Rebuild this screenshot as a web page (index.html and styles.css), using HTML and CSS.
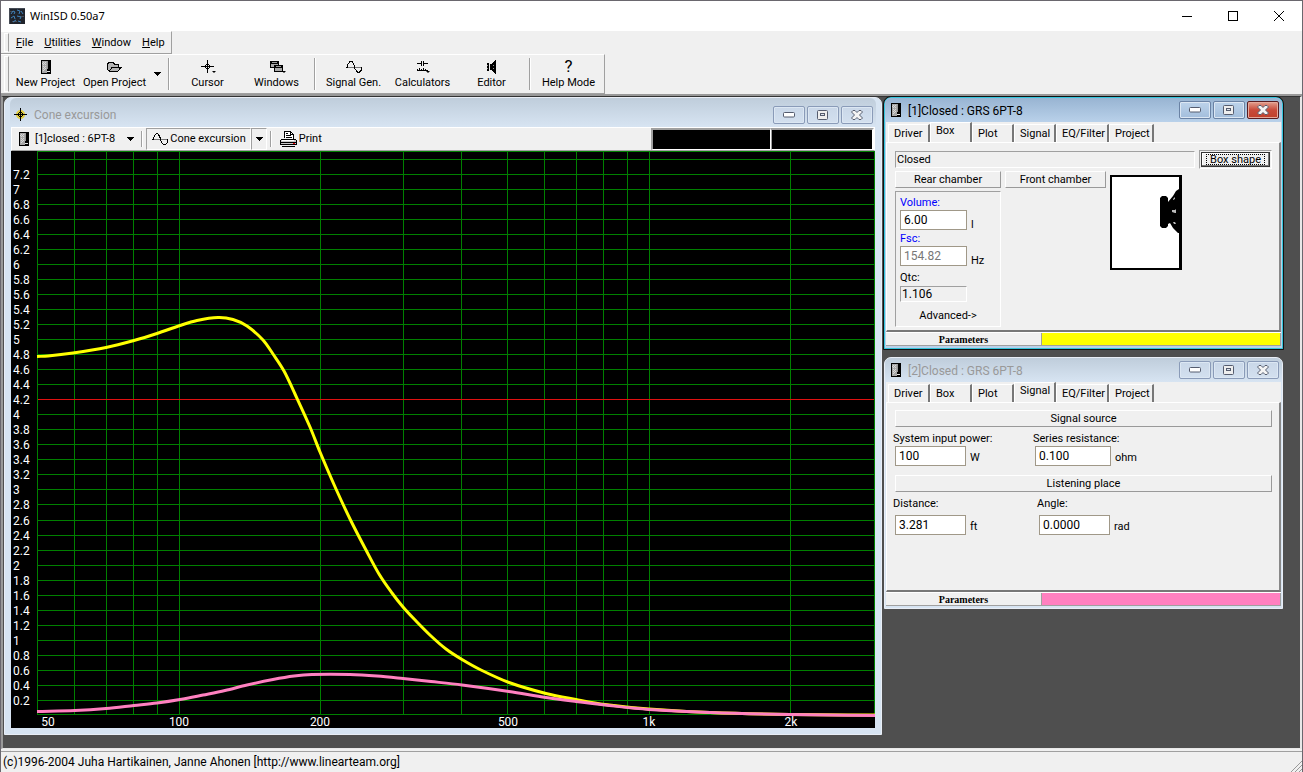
FILE: index.html
```html
<!DOCTYPE html>
<html lang="en">
<head>
<meta charset="utf-8">
<title>WinISD 0.50a7</title>
<link rel="stylesheet" href="styles.css">
</head>
<body>
<svg class="sprites" aria-hidden="true">
  <defs>
    <symbol id="i-box" viewBox="0 0 10 14">
      <path fill="#000" d="M0 0h10v14H0z"/>
      <path fill="#a8a8a8" d="M1 1h5v12H1z"/>
      <path fill="#d8d8d8" d="M2 2h1v1H2zM4 2h1v1H4zM1 3h1v1H1zM3 3h1v1H3zM2 4h1v1H2zM4 4h1v1H4zM2 6h1v1H2zM4 6h1v1H4zM3 7h1v1H3zM2 8h1v1H2zM4 8h1v1H4zM3 9h1v1H3zM2 10h1v1H2z"/>
      <path fill="#e8e8e8" d="M6 11h3v1H6z"/><path fill="#999" d="M6 1h1v8H6z"/>
    </symbol>
    <symbol id="i-folder" viewBox="0 0 15 11">
      <path fill="#b4b4b4" stroke="#000" d="M1.500 9.500l-1-2v-5l2-2h3l2 2h3l1 1v2h3l-4 4.500z"/>
      <path fill="none" stroke="#000" d="M2.500 9.500l3-4h6"/>
    </symbol>
    <symbol id="i-down" viewBox="0 0 8 4"><path d="M0 0h8L4 4z"/></symbol>
    <symbol id="i-target" viewBox="0 0 13 13">
      <path fill="none" stroke="#000" d="M6.500 0v13M0 6.500h13M5 4.500h3M5 8.500h3M4.500 5v3M8.500 5v3"/>
    </symbol>
    <symbol id="i-windows" viewBox="0 0 14 12">
      <path fill="#a8a8a8" stroke="#000" d="M.5.5h8v6h-8z"/><path d="M0 0h9v3H0z"/>
      <path fill="#a8a8a8" stroke="#000" d="M4.500 4.500h8v6h-8z"/><path d="M4 4h9v3H4z"/>
      <path fill="#999" d="M2 1h5v1H2zM6 5h5v1H6z"/>
    </symbol>
    <symbol id="i-wave" viewBox="0 0 16 12">
      <path stroke="#777" d="M0 6.500h16"/>
      <path fill="none" stroke="#000" d="M0 6.500h1.500v-2l2-3 1-1h1l1 1 2 4v2l2 3 1 1h2l2-2v-3.500"/>
    </symbol>
    <symbol id="i-coil" viewBox="0 0 11 11">
      <path fill="none" stroke="#000" d="M0 2.500h4M7 2.500h4M4.500 0v5M6.500 0v5"/>
      <path fill="none" stroke="#000" d="M.5 8v2M2.500 7v2M4.500 8v2M6.500 7v2M8.500 8v2M0 9.500h11"/>
    </symbol>
    <symbol id="i-speaker" viewBox="0 0 9 14">
      <path d="M0 3h2v8H0zM3 4h2l3-4h1v14H8l-3-4H3z"/><path fill="#999" d="M0 5h1v1H0zM0 8h1v1H0zM6 5h1v1H6zM6 8h1v1H6z"/>
    </symbol>
    <symbol id="i-print" viewBox="0 0 17 16">
      <path fill="#fff" stroke="#000" d="M4.500 7V.5h6l3 3V8"/>
      <path fill="none" stroke="#000" d="M10.500.5v3h3M6 2.500h2M6 4.500h5M6 6.500h6"/>
      <path fill="#c8c8c8" stroke="#000" d="M1.500 8.500h14l1 1v4h-16v-4z"/>
      <path stroke="#000" d="M0 11.500h17M2 15.500h13"/><path stroke="#fff" d="M2 9.500h12"/>
      <path fill="#e00" d="M13 12h2v1h-2z"/>
    </symbol>
    <symbol id="i-min" viewBox="0 0 12 6"><rect x=".5" y=".5" width="11" height="4.500" rx="1" fill="#fff" stroke="#555c6e"/></symbol>
    <symbol id="i-restore" viewBox="0 0 12 10"><rect x=".5" y=".5" width="10" height="9" rx="1" fill="#eee" stroke="#555c6e"/><rect x="3.500" y="3.500" width="4" height="2" fill="#dfe5ee" stroke="#555c6e"/></symbol>
    <symbol id="i-close" viewBox="0 0 12 10"><path fill="#f4f4f4" stroke="#555c6e" d="M.5 2L2 .5h2L6 2.500 8 .5h2L11.500 2 8.500 5l3 3L10 9.500H8L6 7.500 4 9.500H2L.5 8l3-3z"/></symbol>
  </defs>
</svg>
<div class="app">
  <header class="titlebar">
    <svg class="app-icon" viewBox="0 0 16 16"><path fill="#20242c" d="M0 0h16v16H0z"/><path fill="none" stroke="#454b55" d="M0 .5h16M.5 0v16M3 13h5M11 8h4M1 3h3"/><path class="smooth" fill="none" stroke="#3e83bd" d="M2 6l2-3 2 1-1 2M8 2l3 1-1 3M2 10l3-2 1 3M8 8l4 1-1 2M4 14l3-2M9 13l3 1M12 3l2 3"/></svg>
    <h1 class="app-title">WinISD 0.50a7</h1>
    <button class="sysbtn" aria-label="Minimize"><svg viewBox="0 0 10 10"><path d="M0 5.500h10"/></svg></button>
    <button class="sysbtn" aria-label="Maximize"><svg viewBox="0 0 10 10"><path d="M.5.5h9v9h-9z"/></svg></button>
    <button class="sysbtn" aria-label="Close"><svg class="smooth" viewBox="0 0 10 10"><path d="M0 0l10 10M10 0L0 10"/></svg></button>
  </header>
  <div class="bands">
    <nav class="band menu">
      <button><u>F</u>ile</button><button><u>U</u>tilities</button><button><u>W</u>indow</button><button><u>H</u>elp</button>
    </nav>
    <div class="band tools">
      <button class="tool"><svg class="ic-box"><use href="#i-box"/></svg>New Project</button>
      <button class="tool"><svg class="ic-folder"><use href="#i-folder"/></svg>Open Project</button>
      <button class="drop" aria-label="Recent projects"><svg class="ic-down"><use href="#i-down"/></svg></button>
      <span class="sep"></span>
      <button class="tool"><span class="has-menu"><svg class="ic-target"><use href="#i-target"/></svg></span>Cursor</button>
      <button class="tool"><span class="has-menu"><svg class="ic-windows"><use href="#i-windows"/></svg></span>Windows</button>
      <span class="sep"></span>
      <button class="tool"><svg class="ic-wave"><use href="#i-wave"/></svg>Signal Gen.</button>
      <button class="tool"><span class="has-menu"><svg class="ic-coil"><use href="#i-coil"/></svg></span>Calculators</button>
      <button class="tool"><svg class="ic-speaker"><use href="#i-speaker"/></svg>Editor</button>
      <span class="sep"></span>
      <button class="tool"><span class="query">?</span>Help Mode</button>
    </div>
  </div>

  <main class="desktop">
    <section class="win chart-win">
      <header class="win-head">
        <svg class="ic-target gold"><use href="#i-target"/></svg>
        <h2>Cone excursion</h2>
        <button class="wbtn" aria-label="Minimize"><svg class="ic-min"><use href="#i-min"/></svg></button>
        <button class="wbtn" aria-label="Restore"><svg class="ic-x"><use href="#i-restore"/></svg></button>
        <button class="wbtn" aria-label="Close"><svg class="ic-x"><use href="#i-close"/></svg></button>
      </header>
      <div class="chart-tools">
        <button class="ct project"><svg class="ic-box"><use href="#i-box"/></svg><span>[1]closed : 6PT-8</span><svg class="ic-down"><use href="#i-down"/></svg></button>
        <span class="sep"></span>
        <button class="ct pressed"><svg class="ic-wave"><use href="#i-wave"/></svg>Cone excursion</button>
        <button class="ct pressed narrow" aria-label="Choose graph"><svg class="ic-down"><use href="#i-down"/></svg></button>
        <span class="sep"></span>
        <button class="ct print"><svg class="ic-print"><use href="#i-print"/></svg>Print</button>
        <output class="readout wide" aria-label="Frequency"></output>
        <output class="readout" aria-label="Value"></output>
      </div>
      <svg class="chart" id="chart" viewBox="11 151 864 577" role="img" aria-label="Cone excursion against frequency"></svg>
    </section>

    <div class="stack">
      <section class="win active">
        <header class="win-head">
          <svg class="ic-box"><use href="#i-box"/></svg>
          <h2>[1]Closed : GRS 6PT-8</h2>
          <button class="wbtn" aria-label="Minimize"><svg class="ic-min"><use href="#i-min"/></svg></button>
          <button class="wbtn" aria-label="Restore"><svg class="ic-x"><use href="#i-restore"/></svg></button>
          <button class="wbtn red" aria-label="Close"><svg class="ic-x"><use href="#i-close"/></svg></button>
        </header>
        <div class="tabs" role="tablist">
          <button role="tab">Driver</button><button role="tab" aria-selected="true">Box</button><button role="tab">Plot</button><button role="tab">Signal</button><button role="tab" class="long">EQ/Filter</button><button role="tab" class="mid">Project</button>
        </div>
        <div class="page box-page">
          <div class="shape-row">
            <output class="sunken grow">Closed</output>
            <span class="well"><button class="shape"><span>Box shape</span></button></span>
          </div>
          <div class="chambers">
            <div class="rear">
              <button class="raised">Rear chamber</button>
              <div class="group">
                <label class="link" for="vol">Volume:</label>
                <div class="row"><input id="vol" value="6.00"><span>l</span></div>
                <label class="link" for="fsc">Fsc:</label>
                <div class="row"><input id="fsc" class="dim" value="154.82" readonly><span>Hz</span></div>
                <label class="qtc" for="qtc">Qtc:</label>
                <output id="qtc" class="sunken">1.106</output>
                <button class="adv">Advanced-&gt;</button>
              </div>
            </div>
            <button class="raised front">Front chamber</button>
            <svg class="cabinet" viewBox="0 0 72 96"><path fill="#000" d="M0 1h72v95H0z"/><path fill="#fff" d="M2 3h67v91H2z"/><path fill="#000" d="M50 24l2-2h4l2 2v4l5-6 3-5 3-2h2v44h-3l-5-5-3-5-2 1v2l-2 2h-4l-2-2z"/><path fill="#bbb" d="M63 25l2-2v2l-2 1zM62 36h3l1-1v4h-1l-3-1zM63 48h2l1 2h-2z"/></svg>
          </div>
        </div>
        <footer class="win-foot"><button>Parameters</button><span class="swatch yellow-fill"></span></footer>
      </section>

      <section class="win">
        <header class="win-head">
          <svg class="ic-box"><use href="#i-box"/></svg>
          <h2>[2]Closed : GRS 6PT-8</h2>
          <button class="wbtn" aria-label="Minimize"><svg class="ic-min"><use href="#i-min"/></svg></button>
          <button class="wbtn" aria-label="Restore"><svg class="ic-x"><use href="#i-restore"/></svg></button>
          <button class="wbtn" aria-label="Close"><svg class="ic-x"><use href="#i-close"/></svg></button>
        </header>
        <div class="tabs" role="tablist">
          <button role="tab">Driver</button><button role="tab">Box</button><button role="tab">Plot</button><button role="tab" aria-selected="true">Signal</button><button role="tab" class="long">EQ/Filter</button><button role="tab" class="mid">Project</button>
        </div>
        <div class="page signal-page">
          <h3 class="raised">Signal source</h3>
          <div class="fields">
            <div><label for="pow">System input power:</label><div class="row"><input id="pow" value="100"><span>W</span></div></div>
            <div><label for="res">Series resistance:</label><div class="row"><input id="res" class="w76" value="0.100"><span>ohm</span></div></div>
          </div>
          <h3 class="raised">Listening place</h3>
          <div class="fields place">
            <div><label for="dist">Distance:</label><div class="row"><input id="dist" value="3.281"><span>ft</span></div></div>
            <div><label for="ang">Angle:</label><div class="row"><input id="ang" value="0.0000"><span>rad</span></div></div>
          </div>
        </div>
        <footer class="win-foot"><button>Parameters</button><span class="swatch pink-fill"></span></footer>
      </section>
    </div>
  </main>
  <footer class="status"><span>(c)1996-2004 Juha Hartikainen, Janne Ahonen [http://www.linearteam.org]</span>
    <svg class="grip" viewBox="0 0 12 12"><path d="M1 12L12 1M5 12l7-7M9 12l3-3"/></svg>
  </footer>
</div>
<script src="chart.js"></script>
</body>
</html>
```
FILE: styles.css
```css
* { box-sizing: border-box; }
body { margin: 0; font: 11px/14px Roboto, "Liberation Sans", sans-serif; color: #000; background: #f0f0f0; }
button, input { font: inherit; color: inherit; border: 0; border-radius: 0; background: none; padding: 0; margin: 0; }
h1, h2, h3 { margin: 0; font: inherit; }
svg { display: block; flex: none; shape-rendering: crispEdges; }
.sprites { position: absolute; width: 0; height: 0; }
.app { min-height: 100vh; display: flex; flex-direction: column; border: 1px solid #6a676e; background: #f0f0f0; }

.titlebar { height: 30px; display: flex; align-items: center; background: #fff; padding-left: 8px; }
.app-icon { width: 16px; height: 16px; margin-right: 5px; }
.app-title { font: 11px/16px "Noto Sans", sans-serif; flex: 1; }
.sysbtn { width: 46px; height: 30px; display: grid; place-items: center; }
.sysbtn svg { width: 10px; height: 10px; fill: none; stroke: #000; }
.smooth { shape-rendering: auto; overflow: visible; }

.bands { display: flex; flex-direction: column; align-items: flex-start; border-bottom: 2px solid #999; }
.band { display: flex; border: 1px solid #a0a0a0; border-left: 0; border-top-color: #fff; padding: 0 1px 0 10px; position: relative; }
.band::before { content: ""; position: absolute; left: 3px; top: 1px; bottom: 1px; width: 3px; border: 1px solid #fff; border-right-color: #a0a0a0; }
.menu { height: 23px; gap: 1px; }
.menu button { padding: 0 5px; }
.tools { height: 40px; align-items: center; }
.tool { width: 69px; height: 38px; padding-bottom: 3px; display: flex; flex-direction: column; align-items: center; justify-content: flex-end; gap: 2px; white-space: nowrap; }
.has-menu { position: relative; }
.has-menu::after { content: ""; position: absolute; right: -2px; bottom: 1px; border: 2px solid transparent; border-top-color: #000; border-bottom: 0; }
.query { font-size: 17px; line-height: 16px; }
.drop { width: 16px; height: 36px; display: grid; place-items: center; }
.sep { width: 2px; align-self: stretch; margin: 3px; border-left: 1px solid #a0a0a0; border-right: 1px solid #fff; }
.ic-box { width: 10px; height: 14px; }
.ic-folder { width: 15px; height: 14px; }
.ic-down { width: 8px; height: 4px; }
.ic-target { width: 13px; height: 15px; }
.gold { background: radial-gradient(circle, #e0cc40 0 4px, transparent 5px); }
.ic-windows { width: 14px; height: 15px; }
.ic-wave { width: 16px; height: 12px; }
.tool .ic-wave { height: 15px; }
.ic-coil { width: 11px; height: 15px; }
.ic-speaker { width: 9px; height: 14px; }
.ic-print { width: 17px; height: 16px; }
.ic-min { width: 12px; height: 6px; }
.ic-x { width: 12px; height: 10px; }
.ic-min, .ic-x { shape-rendering: auto; }

.desktop { flex: 1; display: grid; grid-template-columns: minmax(0, 1fr) 399px; gap: 2px; align-items: start; padding: 0 17px 13px 1px; background: #4f4f4f; border: solid; border-width: 1px 2px 1px 2px; border-color: #333 #e8e8e8 #e8e8e8 #999; }
.stack { display: grid; gap: 8px; }
.win { background: #d7e4f2; border: 1px solid #e9eef6; border-radius: 7px 7px 0 0; padding: 0 1px 2px; }
.win-head { height: 24px; display: flex; align-items: center; gap: 2px; padding: 0 3px 0 6px; margin: 0 -1px; border-radius: 6px 6px 0 0; background: linear-gradient(#bfcddb, #d7e4f2); color: #999; }
.win-head h2 { flex: 1; font-size: 12px; line-height: 16px; padding-left: 5px; padding-top: 1px; }
.active { border-color: #35c5dc; background: #b9d1ea; outline: 1px solid #111; }
.active .win-head { background: linear-gradient(#98b4d2, #b9d1ea); color: #000; }
.wbtn { width: 32px; height: 18px; display: grid; place-items: center; border: 1px solid #8a9bb8; border-radius: 2px; background: linear-gradient(#c9d7e8, #d3e0ef); box-shadow: inset 0 0 0 1px #dce7f3; }
.active .wbtn { background: linear-gradient(#bdd3ea, #a3bedc); border-color: #6a82a4; }
.active .wbtn.red { background: linear-gradient(#e3a08f, #c84a3a 50%, #c0402c); border-color: #5a1c20; box-shadow: inset 0 0 0 1px #e5a99c; }

.chart-win { padding: 0 6px 6px; }
.chart-win .win-head { height: 29px; padding: 4px 3px 0 4px; }
.chart-tools { height: 24px; display: flex; background: #f0f0f0; border: 1px solid #fff; border-bottom-color: #a0a0a0; }
.ct { display: flex; align-items: center; white-space: nowrap; }
.project { padding: 0 4px 0 7px; gap: 6px; }
.project span { padding-right: 5px; }
.pressed { border: 1px solid #a0a0a0; border-right-color: #fff; border-bottom-color: #fff; padding: 0 4px 0 5px; gap: 2px; }
.narrow { padding: 0 3px; }
.print { padding: 0 5px; gap: 2px; flex: 1; }
.readout { width: 103px; background: #000; border: solid; border-width: 2px 2px 1px 1px; border-color: #a0a0a0 #fff #fff #a0a0a0; }
.readout.wide { width: 120px; border-left-width: 2px; border-right-width: 1px; }
.chart { width: 100%; height: auto; background: #000; shape-rendering: auto; }
.grid-line { stroke: #008000; stroke-width: 1; shape-rendering: crispEdges; }
.limit { stroke: #e01010; }
.tick { fill: #fff; font: 12px Roboto, "Liberation Sans", sans-serif; }
.mid-tick { text-anchor: middle; }
.curve { fill: none; stroke-width: 3; stroke-linejoin: round; }
.yellow { stroke: #ff0; }
.pink { stroke: #ff80c0; }

.tabs { display: flex; height: 20px; align-items: flex-end; background: #f0f0f0; padding: 0 2px; }
.tabs button { width: 42px; height: 18px; text-align: left; padding-left: 5px; border: solid; border-width: 1px 2px 0 1px; border-color: #fff #777 #fff #fff; white-space: nowrap; }
.tabs .long { width: 53px; }
.tabs .mid { width: 45px; }
.tabs [aria-selected] { height: 20px; padding-bottom: 4px; }
.page { background: #f0f0f0; border: solid; border-width: 1px 2px 2px 1px; border-color: #fff #888 #777 #fff; min-height: 190px; padding: 7px 7px 2px 8px; }
.shape-row { display: flex; align-items: center; gap: 4px; }
.sunken { display: block; height: 17px; line-height: 15px; border: 1px solid #a0a0a0; border-right-color: #fff; border-bottom-color: #fff; padding-left: 1px; }
.grow { flex: 1; }
.well { border: 1px solid #a0a0a0; border-right-color: #fff; border-bottom-color: #fff; padding: 1px; }
.shape { display: block; width: 69px; height: 15px; border: 1px solid #333; box-shadow: inset -1px -1px #777, inset 1px 1px #fff; padding: 0 3px; }
.shape span { display: block; line-height: 13px; outline: 1px dotted #000; outline-offset: -2px; }
.chambers { display: flex; align-items: flex-start; gap: 4px; padding-top: 2px; }
.raised { display: block; width: 100%; height: 17px; line-height: 15px; text-align: center; border: 1px solid #fff; border-right-color: #999; border-bottom-color: #999; }
.rear { width: 106px; }
.front { width: 101px; }
.cabinet { width: 72px; height: 96px; margin-top: 3px; shape-rendering: auto; }
.group { margin-top: 3px; border: 1px solid #a0a0a0; border-right-color: #fff; border-bottom-color: #fff; padding: 4px 4px 2px; display: flex; flex-direction: column; }
.link { color: #00f; }
.group .qtc { margin-top: 3px; height: 15px; }
.row { display: flex; align-items: flex-start; gap: 4px; }
.group .row { height: 22px; }
.row span { padding-top: 5px; }
.group .row span { padding-top: 8px; }
input { width: 71px; height: 20px; border: 1px solid #a09888; background: #fff; padding: 0 3px; font-size: 12px; }
.group input { width: 67px; }
.group .sunken { width: 67px; height: 16px; line-height: 14px; font-size: 12px; }
input.dim { color: #777; }
.adv { height: 22px; padding-top: 5px; }
.signal-page h3 { margin-bottom: 5px; }
.fields { display: grid; grid-template-columns: 140px 1fr; margin-bottom: 9px; }
.fields label { display: block; height: 14px; margin-left: -2px; }
.fields .row { height: 20px; }
.place label { height: 18px; }
.place { grid-template-columns: 144px 1fr; }
input.w76 { width: 76px; }
.win-foot { display: grid; grid-template-columns: 155px 1fr; height: 14px; background: #f0f0f0; border-top: 1px solid #fff; }
.win-foot button { font: bold 10px/11px "Liberation Serif", serif; border-bottom: 1px solid #a0a0a0; }
.swatch { border: 1px solid #a0a0a0; border-top: 0; }
.yellow-fill { background: #ff0; }
.pink-fill { background: #ff80c0; }

.status { height: 21px; display: flex; align-items: center; justify-content: space-between; border-top: 1px solid #a0a0a0; padding-left: 2px; font-size: 12px; margin-top: 2px; }
.grip { width: 12px; height: 12px; align-self: flex-end; fill: none; stroke: #999; stroke-width: 1; shape-rendering: auto; }
```
FILE: chart.js
```js
const NS = "http://www.w3.org/2000/svg";
const chart = document.getElementById("chart");

function add(name, attrs, text) {
  const el = document.createElementNS(NS, name);
  for (const key in attrs) el.setAttribute(key, attrs[key]);
  if (text) el.textContent = text;
  chart.appendChild(el);
}

const plot = { left: 37.5, right: 874.5, top: 151.5, bottom: 714.5 };
const xOf = hz => Math.floor(179 + Math.log10(hz / 100) * 470) + 0.5;
const yOf = mm => Math.floor(715.5 - mm * 75.18) + 0.5;

for (const hz of [60, 70, 80, 90, 100, 200, 300, 400, 500, 600, 700, 800, 900, 1000, 2000]) {
  add("path", { class: "grid-line", d: `M${xOf(hz)} ${plot.top}V${plot.bottom}` });
}
for (let i = 1; i <= 37; i++) {
  const mm = i / 5, y = yOf(mm);
  add("path", { class: mm === 4.2 ? "grid-line limit" : "grid-line", d: `M${plot.left} ${y}H${plot.right}` });
  if (i < 37) add("text", { class: "tick", x: 13, y: y + 4 }, String(mm));
}
add("path", { class: "grid-line", fill: "none", d: `M${plot.left} ${plot.top}H${plot.right}V${plot.bottom}H${plot.left}z` });
for (const [x, label] of [[48, "50"], [179, "100"], [320, "200"], [508, "500"], [649, "1k"], [791, "2k"]]) {
  add("text", { class: "tick mid-tick", x, y: 726 }, label);
}

// Catmull-Rom spline through the samples, written as cubic segments
function spline(p) {
  let d = `M${p[0]}`;
  for (let i = 0; i < p.length - 1; i++) {
    const a = p[i - 1] || p[i], b = p[i], c = p[i + 1], e = p[i + 2] || c;
    const h = (c[0] - b[0]) / 3;
    const mb = (c[1] - a[1]) / (c[0] - a[0]);
    const mc = (e[1] - b[1]) / (e[0] - b[0]);
    d += `C${b[0] + h} ${b[1] + mb * h} ${c[0] - h} ${c[1] - mc * h} ${c[0]} ${c[1]}`;
  }
  return d;
}

const curves = {
  yellow: [[37, 356.5], [48, 356], [73, 353], [106, 347.5], [134, 340.5], [157, 333.5], [180, 325.5], [197, 320.5], [218, 317.5], [233, 319.5], [247, 326], [263, 340], [273, 354], [284, 371], [295, 394], [310, 427], [320, 452], [336, 489], [351, 521], [366, 550], [379, 574], [392, 593], [403, 607], [416, 621], [431, 636], [446, 649], [462, 659.5], [481, 670], [509, 682.5], [546, 693.5], [576, 699.5], [605, 704.5], [649, 709], [710, 712.5], [790, 714.5], [875, 715]],
  pink: [[37, 711.5], [75, 710.5], [106, 708.5], [134, 705.5], [157, 703], [180, 699.5], [203, 695], [225, 690.5], [247, 685], [273, 679.5], [294, 676], [312, 674.5], [350, 674.5], [377, 676], [403, 678.5], [431, 681.5], [462, 685], [509, 691.5], [546, 697.5], [576, 701.5], [605, 705], [649, 709.5], [710, 712.5], [790, 714.5], [875, 715.5]]
};
for (const name in curves) add("path", { class: `curve ${name}`, d: spline(curves[name]) });
```
